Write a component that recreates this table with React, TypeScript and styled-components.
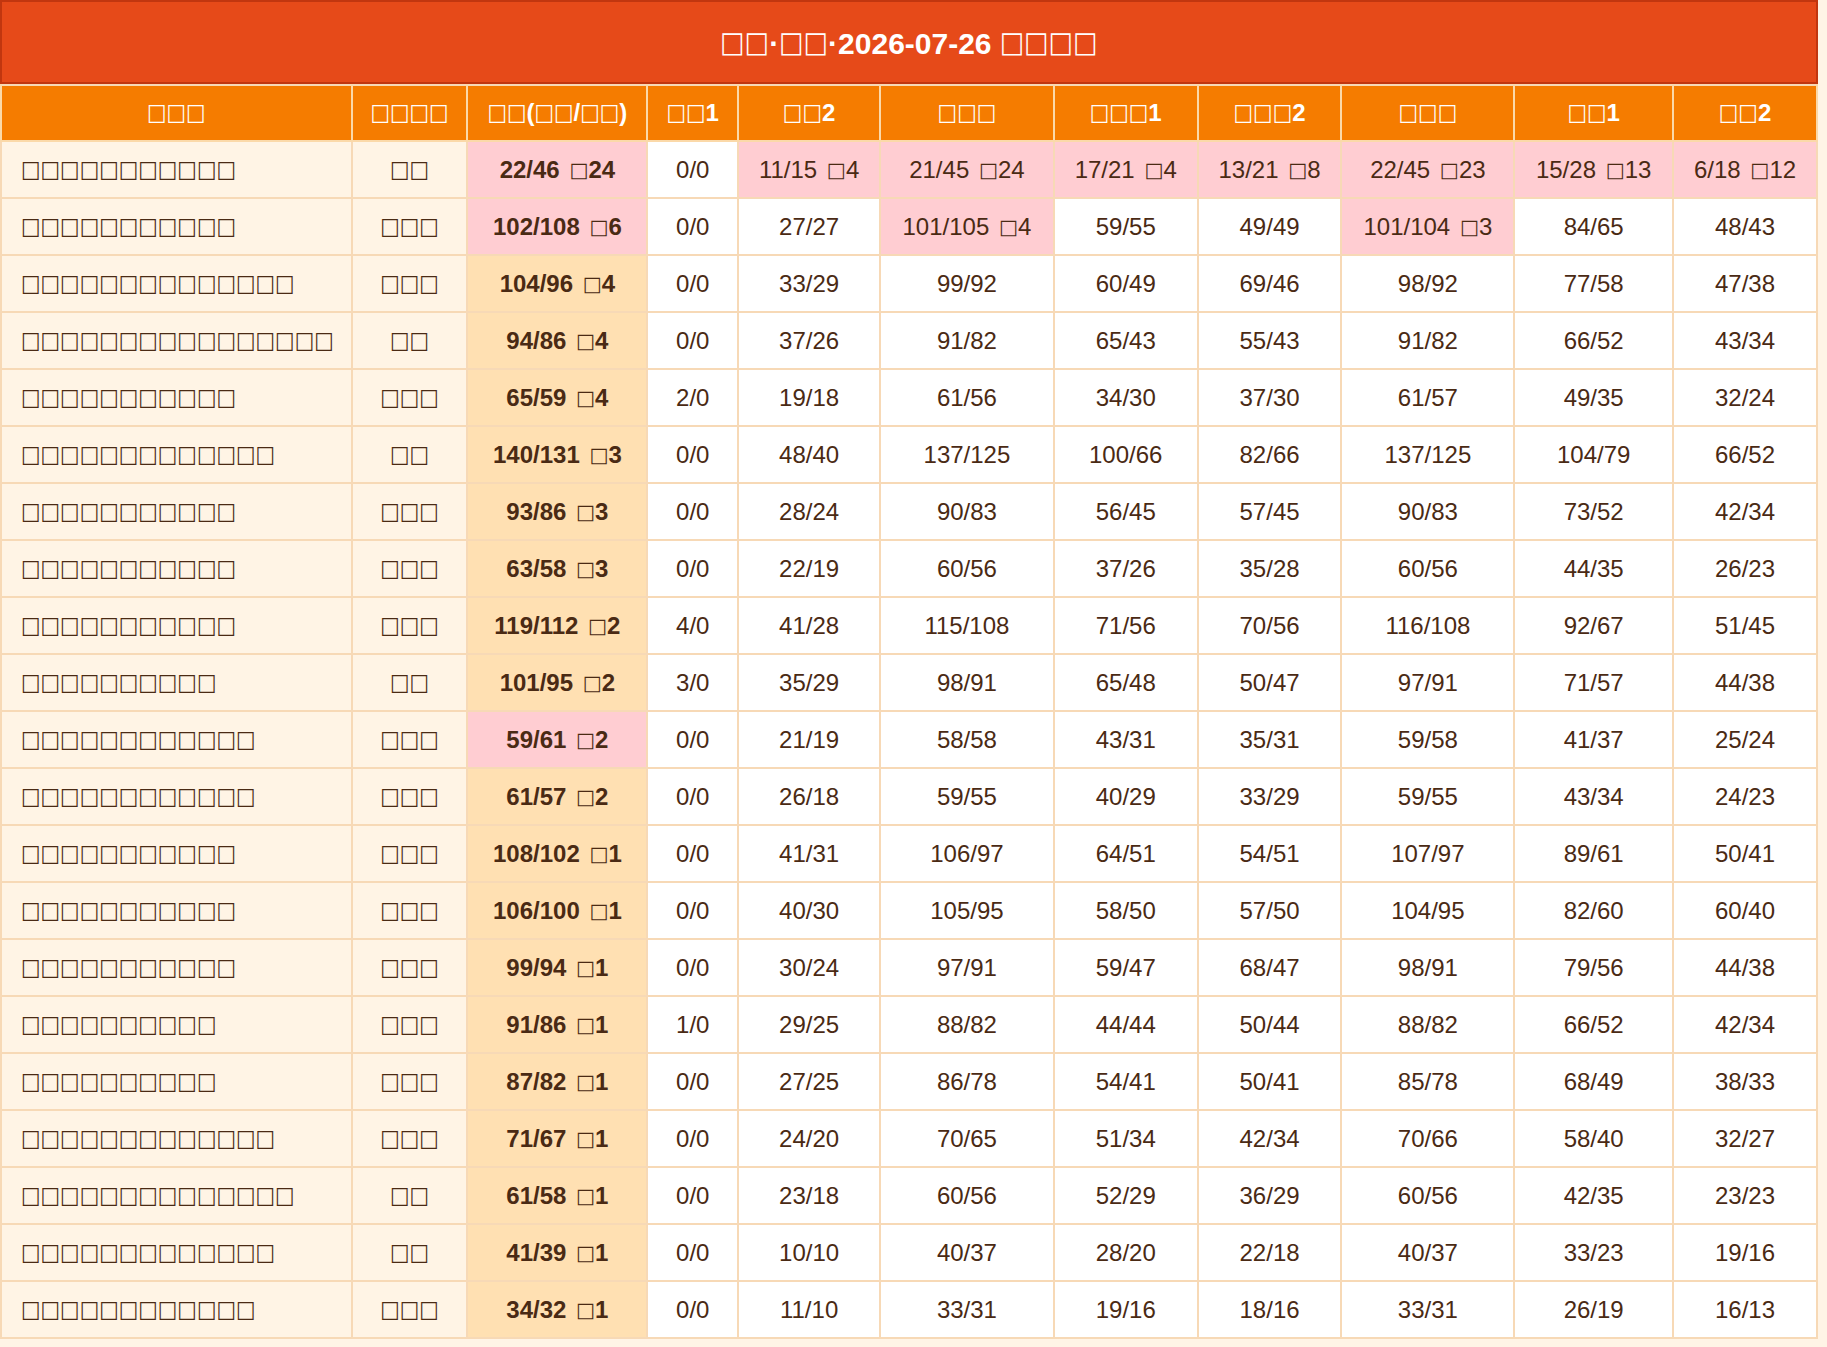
import React from "react";
import styled, { createGlobalStyle } from "styled-components";

const GlobalStyle = createGlobalStyle`
  html, body {
    margin: 0;
    padding: 0;
    background: #fff4e6;
  }
  body {
    font-family: "Liberation Sans", Arial, sans-serif;
    color: #4a2a14;
  }
`;

const Page = styled.div`
  width: 1818px;
  padding-bottom: 9px;
`;

const Title = styled.h1`
  margin: 0;
  height: 80px;
  line-height: 80px;
  background: #e64a19;
  border: 2px solid #c1360f;
  color: #ffffff;
  font-size: 30px;
  font-weight: 700;
  text-align: center;
`;

const Table = styled.table`
  width: 1818px;
  border-collapse: collapse;
  table-layout: fixed;
  border: 2px solid #f7d9b6;
  font-size: 24px;
`;

const Col = styled.col<{ $w: number }>`
  width: ${(p) => (p.$w / 1818) * 100}%;
`;

const Th = styled.th`
  background: #f57c00;
  color: #ffffff;
  font-weight: 700;
  height: 54px;
  padding: 0 4px;
  line-height: 26px;
  text-align: center;
  border: 2px solid #fbd9a9;
  border-top: none;
  white-space: nowrap;
`;

type Kind = "name" | "type" | "total" | "plain";

const Td = styled.td<{ $kind: Kind; $hot?: boolean }>`
  height: 55px;
  padding: 0 4px;
  line-height: 27px;
  border: 2px solid #f7d9b6;
  white-space: nowrap;
  text-align: ${(p) => (p.$kind === "name" ? "left" : "center")};
  padding-left: ${(p) => (p.$kind === "name" ? "19px" : "4px")};
  font-weight: ${(p) => (p.$kind === "total" ? 700 : 400)};
  background: ${(p) =>
    p.$hot
      ? "#ffcdd2"
      : p.$kind === "name" || p.$kind === "type"
      ? "#fff4e5"
      : p.$kind === "total"
      ? "#ffe0b2"
      : "#ffffff"};
`;

/* CJK characters that the reference shows as missing-glyph boxes */
const Cjk = styled.span<{ $mark?: boolean }>`
  display: inline-block;
  font-family: "DejaVu Sans", sans-serif;
  font-weight: 400;
  font-size: ${(p) => (p.$mark ? "0.84em" : "0.8625em")};
  vertical-align: ${(p) => (p.$mark ? "0.05em" : "0.1em")};
  margin-left: ${(p) => (p.$mark ? "3px" : "0")};
  transform: scaleY(${(p) => (p.$mark ? 1.04 : 1.13)});
`;

function Txt({ text, marks }: { text: string; marks?: boolean }) {
  const parts = text.split(/(□+)/).filter((s) => s.length > 0);
  return (
    <>
      {parts.map((p, i) =>
        p[0] === "□" ? (
          <Cjk key={i} $mark={marks && i > 0}>
            {p}
          </Cjk>
        ) : (
          <React.Fragment key={i}>{p}</React.Fragment>
        )
      )}
    </>
  );
}

const sq = (n: number) => "□".repeat(n);

const headers: { label: string; w: number }[] = [
  { label: sq(3), w: 351 },
  { label: sq(4), w: 116 },
  { label: "□□(□□/□□)", w: 180 },
  { label: "□□1", w: 91 },
  { label: "□□2", w: 142 },
  { label: sq(3), w: 174 },
  { label: "□□□1", w: 144 },
  { label: "□□□2", w: 144 },
  { label: sq(3), w: 173 },
  { label: "□□1", w: 159 },
  { label: "□□2", w: 144 },
];

type Row = { name: number; type: number; cells: string[] };

const rows: Row[] = [
  { name: 11, type: 2, cells: ["22/46 □24", "0/0", "11/15 □4", "21/45 □24", "17/21 □4", "13/21 □8", "22/45 □23", "15/28 □13", "6/18 □12"] },
  { name: 11, type: 3, cells: ["102/108 □6", "0/0", "27/27", "101/105 □4", "59/55", "49/49", "101/104 □3", "84/65", "48/43"] },
  { name: 14, type: 3, cells: ["104/96 □4", "0/0", "33/29", "99/92", "60/49", "69/46", "98/92", "77/58", "47/38"] },
  { name: 16, type: 2, cells: ["94/86 □4", "0/0", "37/26", "91/82", "65/43", "55/43", "91/82", "66/52", "43/34"] },
  { name: 11, type: 3, cells: ["65/59 □4", "2/0", "19/18", "61/56", "34/30", "37/30", "61/57", "49/35", "32/24"] },
  { name: 13, type: 2, cells: ["140/131 □3", "0/0", "48/40", "137/125", "100/66", "82/66", "137/125", "104/79", "66/52"] },
  { name: 11, type: 3, cells: ["93/86 □3", "0/0", "28/24", "90/83", "56/45", "57/45", "90/83", "73/52", "42/34"] },
  { name: 11, type: 3, cells: ["63/58 □3", "0/0", "22/19", "60/56", "37/26", "35/28", "60/56", "44/35", "26/23"] },
  { name: 11, type: 3, cells: ["119/112 □2", "4/0", "41/28", "115/108", "71/56", "70/56", "116/108", "92/67", "51/45"] },
  { name: 10, type: 2, cells: ["101/95 □2", "3/0", "35/29", "98/91", "65/48", "50/47", "97/91", "71/57", "44/38"] },
  { name: 12, type: 3, cells: ["59/61 □2", "0/0", "21/19", "58/58", "43/31", "35/31", "59/58", "41/37", "25/24"] },
  { name: 12, type: 3, cells: ["61/57 □2", "0/0", "26/18", "59/55", "40/29", "33/29", "59/55", "43/34", "24/23"] },
  { name: 11, type: 3, cells: ["108/102 □1", "0/0", "41/31", "106/97", "64/51", "54/51", "107/97", "89/61", "50/41"] },
  { name: 11, type: 3, cells: ["106/100 □1", "0/0", "40/30", "105/95", "58/50", "57/50", "104/95", "82/60", "60/40"] },
  { name: 11, type: 3, cells: ["99/94 □1", "0/0", "30/24", "97/91", "59/47", "68/47", "98/91", "79/56", "44/38"] },
  { name: 10, type: 3, cells: ["91/86 □1", "1/0", "29/25", "88/82", "44/44", "50/44", "88/82", "66/52", "42/34"] },
  { name: 10, type: 3, cells: ["87/82 □1", "0/0", "27/25", "86/78", "54/41", "50/41", "85/78", "68/49", "38/33"] },
  { name: 13, type: 3, cells: ["71/67 □1", "0/0", "24/20", "70/65", "51/34", "42/34", "70/66", "58/40", "32/27"] },
  { name: 14, type: 2, cells: ["61/58 □1", "0/0", "23/18", "60/56", "52/29", "36/29", "60/56", "42/35", "23/23"] },
  { name: 13, type: 2, cells: ["41/39 □1", "0/0", "10/10", "40/37", "28/20", "22/18", "40/37", "33/23", "19/16"] },
  { name: 12, type: 3, cells: ["34/32 □1", "0/0", "11/10", "33/31", "19/16", "18/16", "33/31", "26/19", "16/13"] },
];

const isHot = (v: string) => {
  const m = v.match(/^(\d+)\/(\d+)/);
  if (!m) return false;
  return Number(m[1]) < Number(m[2]);
};

export default function App() {
  return (
    <Page>
      <GlobalStyle />
      <Title>
        <Txt text="□□·□□·2026-07-26 □□□□" />
      </Title>
      <Table>
        <colgroup>
          {headers.map((h, i) => (
            <Col key={i} $w={h.w} />
          ))}
        </colgroup>
        <thead>
          <tr>
            {headers.map((h, i) => (
              <Th key={i}>
                <Txt text={h.label} />
              </Th>
            ))}
          </tr>
        </thead>
        <tbody>
          {rows.map((r, i) => (
            <tr key={i}>
              <Td $kind="name">
                <Txt text={sq(r.name)} />
              </Td>
              <Td $kind="type">
                <Txt text={sq(r.type)} />
              </Td>
              {r.cells.map((c, j) => (
                <Td key={j} $kind={j === 0 ? "total" : "plain"} $hot={isHot(c)}>
                  <Txt text={c} marks />
                </Td>
              ))}
            </tr>
          ))}
        </tbody>
      </Table>
    </Page>
  );
}
